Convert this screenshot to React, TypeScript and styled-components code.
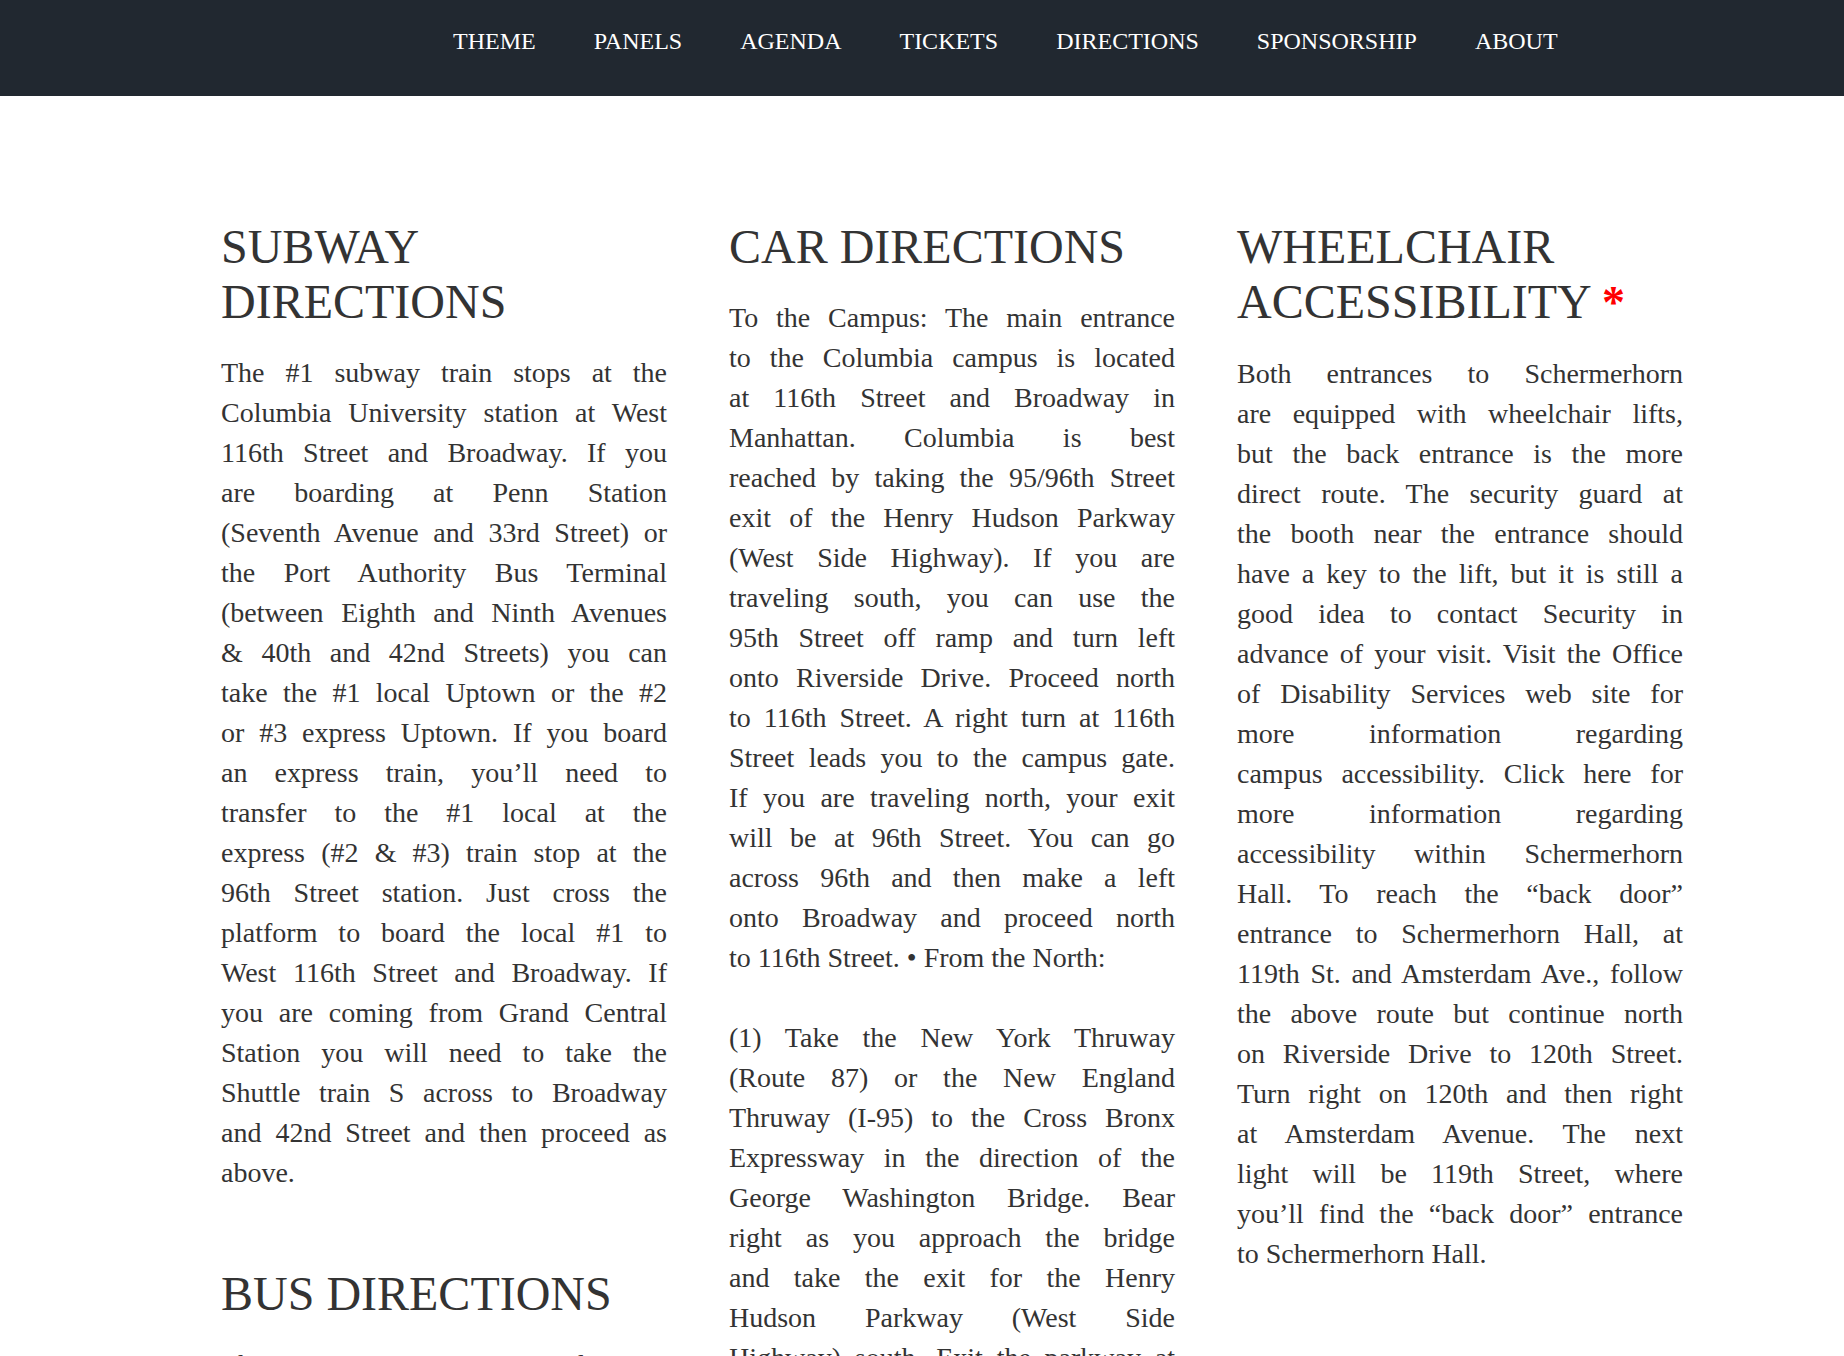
import React from "react";
import styled, { createGlobalStyle } from "styled-components";

const GlobalStyle = createGlobalStyle`
  html, body {
    margin: 0;
    padding: 0;
    background: #ffffff;
  }
  body {
    font-family: "Liberation Serif", "Times New Roman", serif;
    color: #333333;
  }
  * { box-sizing: border-box; }
`;

const NavBar = styled.nav`
  height: 96px;
  background: #212830;
  display: flex;
  align-items: flex-start;
  padding: 29px 0 0 453px;
  gap: 58px;
`;

const NavLink = styled.a`
  font-family: "Liberation Serif", "Times New Roman", serif;
  font-size: 24px;
  line-height: 25px;
  color: #ffffff;
  text-decoration: none;
  text-transform: uppercase;
  white-space: nowrap;
  cursor: pointer;
`;

const Main = styled.main`
  display: grid;
  grid-template-columns: repeat(3, 446px);
  column-gap: 62px;
  padding: 123px 0 0 221px;
`;

const Column = styled.div`
  display: flex;
  flex-direction: column;
  gap: 33px;
`;

const Section = styled.section`
  display: block;
`;

const Heading = styled.h2`
  margin: 0 0 24px;
  font-family: "Liberation Serif", "Times New Roman", serif;
  font-weight: 400;
  font-size: 48px;
  line-height: 55px;
  color: #333333;
  text-transform: uppercase;
`;

const Star = styled.span`
  color: #ff0000;
  font-weight: 700;
  font-size: 46px;
`;

const Paragraph = styled.p`
  margin: 0 0 40px;
  font-size: 28px;
  line-height: 40px;
  color: #333333;
`;

const Line = styled.span<{ $last: boolean }>`
  display: block;
  text-align: ${(p) => (p.$last ? "left" : "justify")};
  text-align-last: ${(p) => (p.$last ? "left" : "justify")};
`;

const Para: React.FC<{ lines: string[]; open?: boolean }> = ({ lines, open }) => (
  <Paragraph>
    {lines.map((l, i) => (
      <Line key={i} $last={!open && i === lines.length - 1}>
        {l}
      </Line>
    ))}
  </Paragraph>
);

const navItems = ["Theme", "Panels", "Agenda", "Tickets", "Directions", "Sponsorship", "About"];

const subway = [
  "The #1 subway train stops at the",
  "Columbia University station at West",
  "116th Street and Broadway. If you",
  "are boarding at Penn Station",
  "(Seventh Avenue and 33rd Street) or",
  "the Port Authority Bus Terminal",
  "(between Eighth and Ninth Avenues",
  "& 40th and 42nd Streets) you can",
  "take the #1 local Uptown or the #2",
  "or #3 express Uptown. If you board",
  "an express train, you\u2019ll need to",
  "transfer to the #1 local at the",
  "express (#2 & #3) train stop at the",
  "96th Street station. Just cross the",
  "platform to board the local #1 to",
  "West 116th Street and Broadway. If",
  "you are coming from Grand Central",
  "Station you will need to take the",
  "Shuttle train S across to Broadway",
  "and 42nd Street and then proceed as",
  "above.",
];

const bus = [
  "The M4, M5, M11, M60 and M104 buses",
  "all stop near the Columbia campus on",
  "Broadway or Amsterdam Avenue.",
];

const car1 = [
  "To the Campus: The main entrance",
  "to the Columbia campus is located",
  "at 116th Street and Broadway in",
  "Manhattan. Columbia is best",
  "reached by taking the 95/96th Street",
  "exit of the Henry Hudson Parkway",
  "(West Side Highway). If you are",
  "traveling south, you can use the",
  "95th Street off ramp and turn left",
  "onto Riverside Drive. Proceed north",
  "to 116th Street. A right turn at 116th",
  "Street leads you to the campus gate.",
  "If you are traveling north, your exit",
  "will be at 96th Street. You can go",
  "across 96th and then make a left",
  "onto Broadway and proceed north",
  "to 116th Street. \u2022 From the North:",
];

const car2 = [
  "(1) Take the New York Thruway",
  "(Route 87) or the New England",
  "Thruway (I-95) to the Cross Bronx",
  "Expressway in the direction of the",
  "George Washington Bridge. Bear",
  "right as you approach the bridge",
  "and take the exit for the Henry",
  "Hudson Parkway (West Side",
  "Highway) south. Exit the parkway at",
  "95th Street and follow the directions",
  "above.",
];

const wheelchair = [
  "Both entrances to Schermerhorn",
  "are equipped with wheelchair lifts,",
  "but the back entrance is the more",
  "direct route. The security guard at",
  "the booth near the entrance should",
  "have a key to the lift, but it is still a",
  "good idea to contact Security in",
  "advance of your visit. Visit the Office",
  "of Disability Services web site for",
  "more information regarding",
  "campus accessibility. Click here for",
  "more information regarding",
  "accessibility within Schermerhorn",
  "Hall. To reach the \u201cback door\u201d",
  "entrance to Schermerhorn Hall, at",
  "119th St. and Amsterdam Ave., follow",
  "the above route but continue north",
  "on Riverside Drive to 120th Street.",
  "Turn right on 120th and then right",
  "at Amsterdam Avenue. The next",
  "light will be 119th Street, where",
  "you\u2019ll find the \u201cback door\u201d entrance",
  "to Schermerhorn Hall.",
];

export default function App() {
  return (
    <>
      <GlobalStyle />
      <NavBar>
        {navItems.map((n) => (
          <NavLink key={n}>{n}</NavLink>
        ))}
      </NavBar>
      <Main>
        <Column>
          <Section>
            <Heading>Subway Directions</Heading>
            <Para lines={subway} />
          </Section>
          <Section>
            <Heading>Bus Directions</Heading>
            <Para lines={bus} />
          </Section>
        </Column>
        <Column>
          <Section>
            <Heading>Car Directions</Heading>
            <Para lines={car1} />
            <Para lines={car2} />
          </Section>
        </Column>
        <Column>
          <Section>
            <Heading>
              Wheelchair Accessibility <Star>*</Star>
            </Heading>
            <Para lines={wheelchair} />
          </Section>
        </Column>
      </Main>
    </>
  );
}
